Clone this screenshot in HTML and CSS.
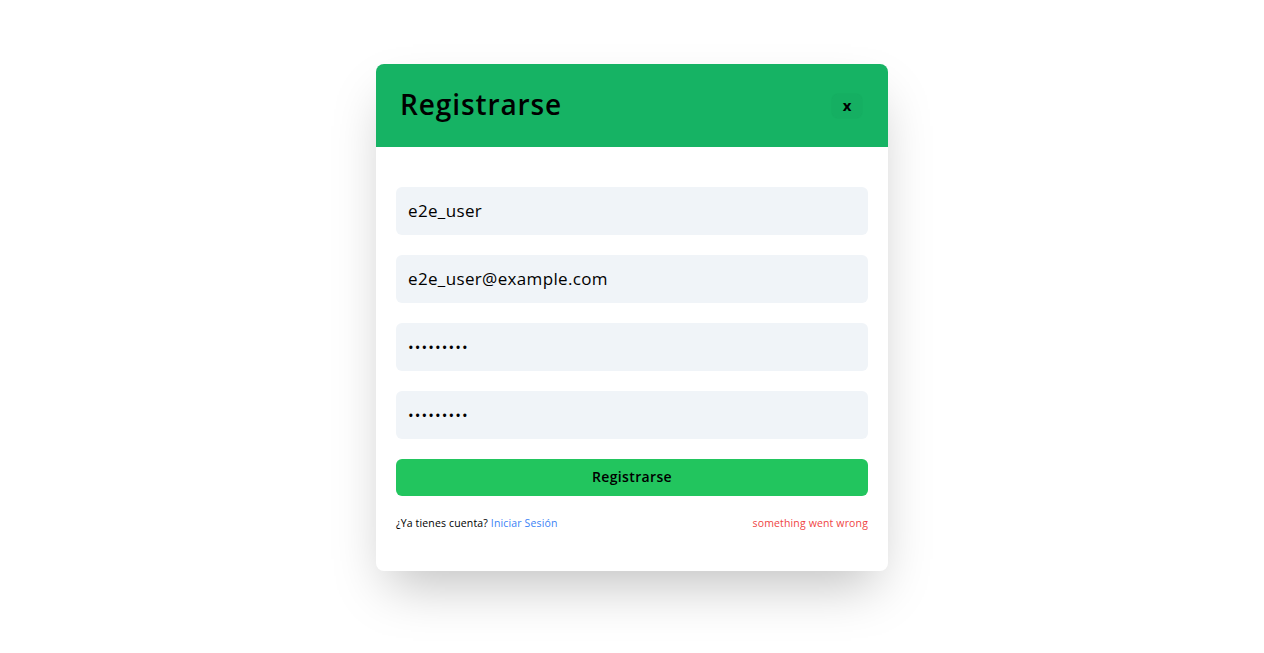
FILE: index.html
```html
<!DOCTYPE html>
<html lang="es">
<head>
<meta charset="utf-8">
<title>Registrarse</title>
<link rel="stylesheet" href="styles.css">
</head>
<body>
<div class="page">
  <div class="modal">
    <div class="modal-header">
      <h2 class="modal-title">Registrarse</h2>
      <button class="close-btn" type="button">x</button>
    </div>
    <form class="modal-body">
      <input class="field" type="text" value="e2e_user">
      <input class="field" type="email" value="e2e_user@example.com">
      <input class="field" type="password" value="password1">
      <input class="field" type="password" value="password1">
      <button class="submit-btn" type="button">Registrarse</button>
      <div class="footer-row">
        <span class="login-text">¿Ya tienes cuenta? <a class="login-link" href="#">Iniciar Sesión</a></span>
        <span class="error-text">something went wrong</span>
      </div>
    </form>
  </div>
</div>
</body>
</html>
```
FILE: styles.css
```css
* { box-sizing: border-box; }
html, body { margin: 0; padding: 0; background: #ffffff; }
body { font-family: "Open Sans", "Liberation Sans", sans-serif; color: #000; }
.page {
  padding-top: 64px;
  min-height: 100vh;
  display: flex;
  justify-content: center;
  align-items: flex-start;
}
.modal {
  width: 512px;
  background: #fff;
  border-radius: 8px;
  overflow: hidden;
  box-shadow: 0 25px 50px -12px rgba(0,0,0,0.25);
}
.modal-header {
  background: #16b364;
  height: 83px;
  display: flex;
  align-items: center;
  justify-content: space-between;
  padding: 0 26px 0 24px;
}
.modal-title {
  margin: 0 0 3px;
  font-size: 28px;
  font-weight: 600;
  letter-spacing: 0.9px;
}
.close-btn {
  width: 30px;
  height: 24px;
  border: none;
  border-radius: 6px;
  background: rgba(0,0,0,0.02);
  box-shadow: 0 0 2px rgba(0,0,0,0.05);
  font-family: inherit;
  font-weight: 700;
  font-size: 15px;
  line-height: 1;
  padding: 0;
  color: #000;
}
.modal-body {
  padding: 40px 20px 40px;
  display: flex;
  flex-direction: column;
  gap: 20px;
  margin: 0;
}
.field {
  height: 48px;
  width: 100%;
  border: none;
  border-radius: 6px;
  background: #f0f4f8;
  padding: 0 12px 2px;
  font-family: inherit;
  font-size: 17px;
  letter-spacing: 0.35px;
  color: #000;
  outline: none;
}
.field[type="password"] { font-size: 15px; letter-spacing: 1.1px; padding-bottom: 0; }
.submit-btn {
  height: 37px;
  border: none;
  border-radius: 6px;
  background: #22c55e;
  font-family: inherit;
  font-weight: 600;
  font-size: 14px;
  letter-spacing: 0.35px;
  color: #000;
  padding: 0 0 2px;
}
.footer-row {
  display: flex;
  justify-content: space-between;
  font-size: 10.5px;
  letter-spacing: 0.15px;
  margin-top: -1px;
  line-height: 16px;
}
.login-link { color: #3b82f6; text-decoration: none; }
.error-text { color: #ef4444; }
```
